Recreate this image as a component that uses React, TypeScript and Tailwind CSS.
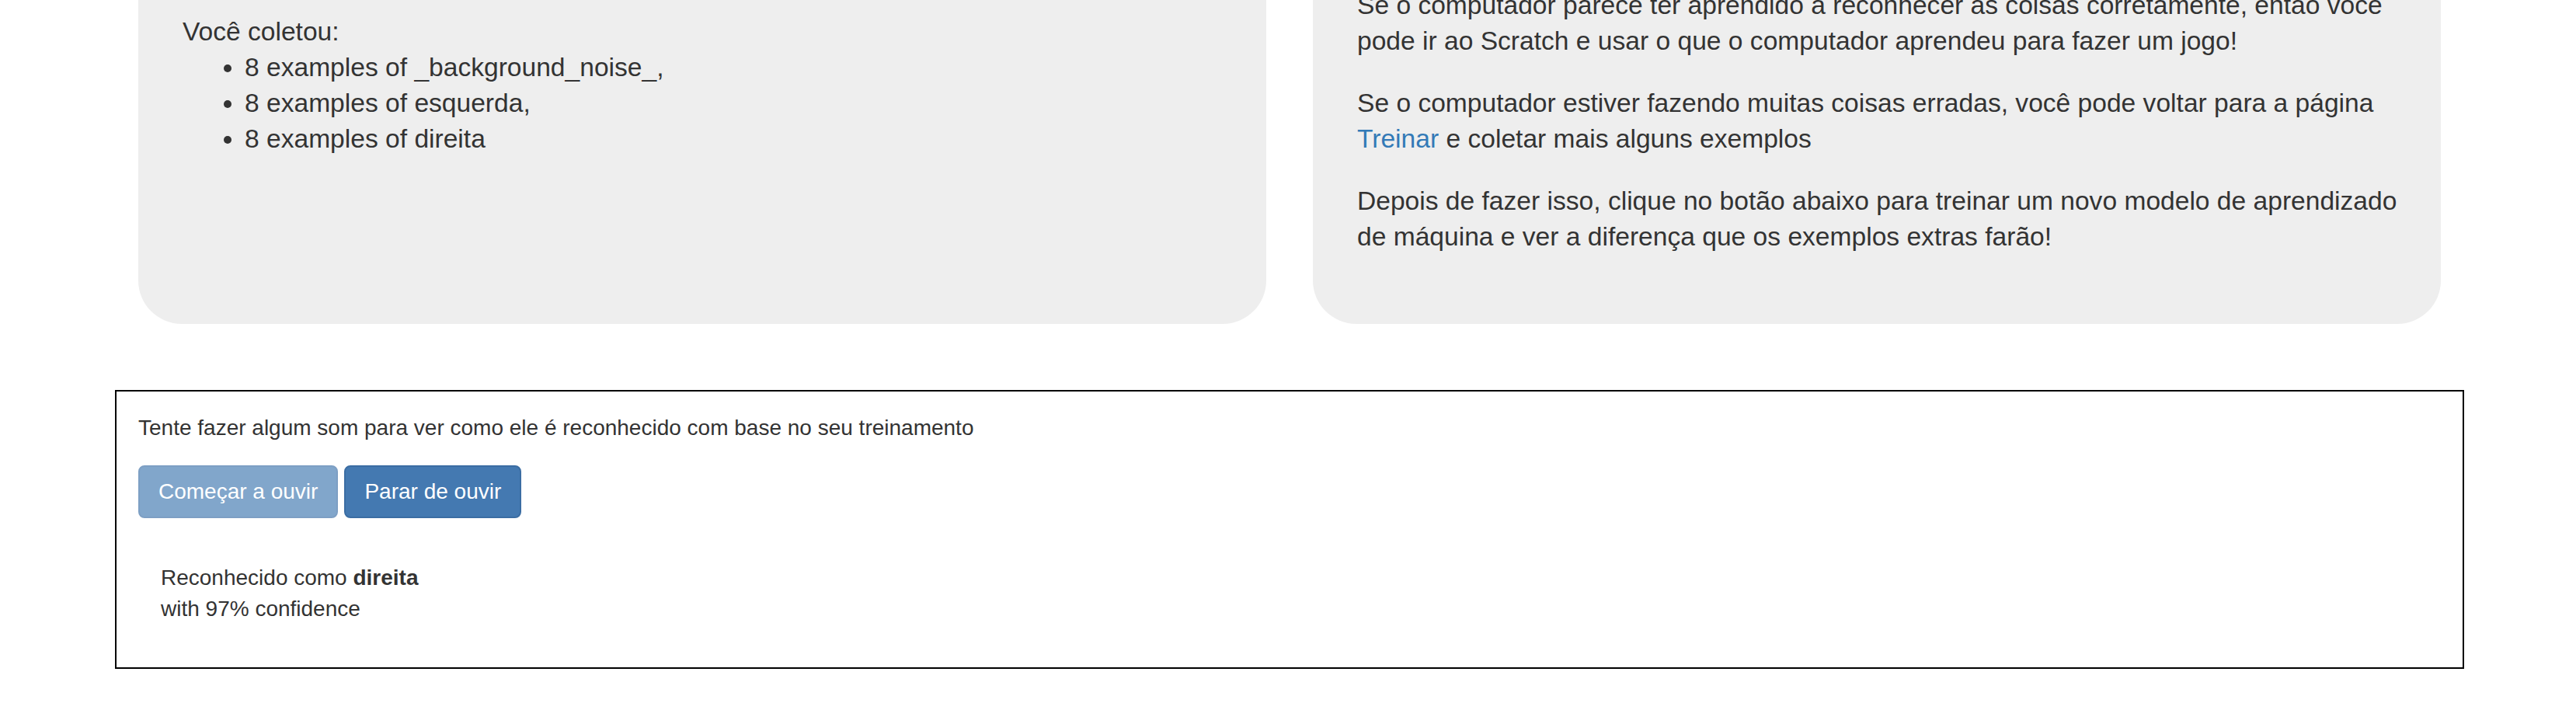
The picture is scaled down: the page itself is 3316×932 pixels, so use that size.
import React from 'react';

const font = { fontFamily: '"Liberation Sans", Arial, sans-serif' };

const classes = ['_background_noise_', 'esquerda', 'direita'];

const Card: React.FC<{ children: React.ReactNode; className?: string }> = ({ children, className }) => (
  <div className={`bg-[#eeeeee] rounded-b-[56px] px-[57px] pb-[55px] ${className || ''}`}>{children}</div>
);

export default function App() {
  return (
    <div className="min-h-[932px] bg-white text-[#333333] overflow-hidden" style={font}>
      {/* Summary cards, scrolled part-way */}
      <div className="grid grid-cols-2 gap-[60px] ml-[178px] w-[2964px] -mt-[73px] text-[33.6px] leading-[46px]">
        <Card className="pt-[57px]">
          <div className="mt-[34px]">Você coletou:</div>
          <ul className="list-disc pl-[80px]">
            {classes.map((c, i) => (
              <li key={c}>
                8 examples of {c}
                {i < classes.length - 1 ? ',' : ''}
              </li>
            ))}
          </ul>
        </Card>
        <Card className="pt-[57px]">
          <p className="mb-[34px] whitespace-nowrap">
            Se o computador parece ter aprendido a reconhecer as coisas corretamente, então você
            <br />
            pode ir ao Scratch e usar o que o computador aprendeu para fazer um jogo!
          </p>
          <p className="mb-[34px] whitespace-nowrap">
            Se o computador estiver fazendo muitas coisas erradas, você pode voltar para a página
            <br />
            <a className="text-[#337ab7]">Treinar</a> e coletar mais alguns exemplos
          </p>
          <p className="mb-[34px] whitespace-nowrap">
            Depois de fazer isso, clique no botão abaixo para treinar um novo modelo de aprendizado
            <br />
            de máquina e ver a diferença que os exemplos extras farão!
          </p>
        </Card>
      </div>

      {/* Live test panel */}
      <div className="mt-[85px] ml-[148px] w-[3024px] h-[359px] border-2 border-black pt-[27px] pl-[28px] text-[28px] leading-[40px]">
        <div>Tente fazer algum som para ver como ele é reconhecido com base no seu treinamento</div>
        <div className="flex gap-[8px] mt-[28px]">
          <button
            disabled
            className="h-[68px] px-[24px] rounded-[8px] border-2 border-[#7d9fc4] bg-[#81a6cb] text-white text-[28px]"
          >
            Começar a ouvir
          </button>
          <button className="h-[68px] px-[24px] rounded-[8px] border-2 border-[#3b6da3] bg-[#4479b1] text-white text-[28px]">
            Parar de ouvir
          </button>
        </div>
        <div className="mt-[57px] ml-[29px]">
          <div>
            Reconhecido como <strong className="font-bold">direita</strong>
          </div>
          <div>with 97% confidence</div>
        </div>
      </div>
    </div>
  );
}
